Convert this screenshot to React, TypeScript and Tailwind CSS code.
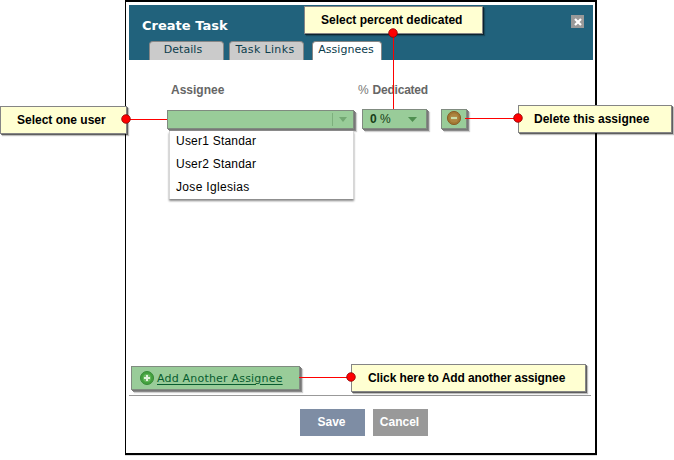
import React from "react";

const calloutBase =
  "absolute flex items-center border border-[#858585] bg-[#ffffd2] pb-px font-['Liberation_Sans',Arial,sans-serif] text-[12px] font-bold whitespace-nowrap text-black shadow-[1px_1px_0_rgba(0,0,0,0.5),2px_2px_1px_rgba(0,0,0,0.25)]";

const greenBox =
  "border border-[#808b80] bg-[#99cc99] shadow-[1px_1px_0_#777,2px_2px_0_#8a8a8a,3px_3px_1px_#d0d0d0]";

function Dot({ className }: { className: string }) {
  return (
    <svg className={`absolute size-[10px] ${className}`} viewBox="0 0 10 10">
      <circle cx="5" cy="5" r="4.3" fill="#ff0000" stroke="#8c0000" strokeWidth="0.8" />
    </svg>
  );
}

function Tab({ children, className }: { children: string; className: string }) {
  return (
    <div
      className={`flex h-[19px] justify-center rounded-t-[4px] border border-b-0 border-[#878787] font-['DejaVu_Sans',Verdana,sans-serif] text-[11px] leading-[15px] whitespace-nowrap text-[#0c3d4c] ${className}`}
    >
      {children}
    </div>
  );
}

function Header() {
  return (
    <header className="flex h-[55px] flex-col justify-between bg-[#21627c]">
      <div className="flex h-[36px] items-start justify-between pr-[9px] pl-[13px]">
        <h1 className="pt-[13px] font-['DejaVu_Sans',Verdana,sans-serif] text-[13px] leading-[16px] font-bold tracking-[0.02px] whitespace-nowrap text-white">
          Create Task
        </h1>
        <button className="mt-[10px] flex size-[13px] items-center justify-center bg-[#999]" aria-label="Close">
          <svg className="size-[8px]" viewBox="0 0 8 8">
            <path d="M1 1L7 7M7 1L1 7" stroke="#fff" strokeWidth="2.2" />
          </svg>
        </button>
      </div>
      <nav className="flex pl-5">
        <Tab className="mr-[5px] w-[75px] bg-[#cbcbcb] pr-[7px] tracking-[0.05px]">Details</Tab>
        <Tab className="mr-[8px] w-[75px] bg-[#cbcbcb] pr-[3px] tracking-[0.35px]">Task Links</Tab>
        <Tab className="w-[70px] bg-white pr-[2px] tracking-[0.03px]">Assignees</Tab>
      </nav>
    </header>
  );
}

function Body() {
  return (
    <main className="flex h-[335px] shrink-0 flex-col text-[12px]">
      <div className="flex h-[50px] shrink-0 items-start pt-[23px] pl-[42px] leading-[14px] font-bold whitespace-nowrap text-[#666]">
        <span className="w-[187px]">Assignee</span>
        <span className="tracking-[-0.22px]">
          <span className="mr-[1px] font-normal text-[#777]">%</span> Dedicated
        </span>
      </div>
      <div className="flex h-[256px] shrink-0 items-start pl-[38px]">
        <div className="flex w-[187px] flex-col">
          <div className={`flex h-[19px] items-center justify-end pr-[6px] ${greenBox}`}>
            <span className="mr-[6px] h-[13px] w-px bg-[#7db07d]" />
            <svg className="h-[5px] w-[8px]" viewBox="0 0 8 5">
              <path d="M0 0H8L4 5Z" fill="#73a873" />
            </svg>
          </div>
          <ul className="mt-[2px] ml-[2px] h-[68px] w-[185px] border-x border-[#d7d7d7] bg-white pl-[6px] leading-[23px] whitespace-nowrap text-black shadow-[0_2px_2px_#888]">
            <li className="-mt-px tracking-[0.22px]">User1 Standar</li>
            <li className="tracking-[0.22px]">User2 Standar</li>
            <li className="tracking-[0.32px]">Jose Iglesias</li>
          </ul>
        </div>
        <div className={`-mt-px ml-[8px] flex h-[20px] w-[65px] items-center justify-between pr-[9px] pl-[7px] ${greenBox}`}>
          <span className="text-[12px] whitespace-nowrap text-[#173e17]">
            <b>0</b> <span className="tracking-[-0.3px]">%</span>
          </span>
          <svg className="h-[5px] w-[9px]" viewBox="0 0 9 5">
            <path d="M0 0H9L4.5 5Z" fill="#4f8f50" />
          </svg>
        </div>
        <button className={`-mt-px ml-[14px] flex h-5 w-[26px] items-start justify-center ${greenBox}`} aria-label="Delete">
          <svg className="size-[16px]" viewBox="0 0 16 16">
            <circle cx="8" cy="8" r="6.6" fill="#a17632" stroke="#896029" />
            <circle cx="8" cy="8" r="4.6" fill="#ad8540" />
            <path d="M5 8H11" stroke="#c9dda8" strokeWidth="2.2" />
          </svg>
        </button>
      </div>
      <div className="flex flex-1 items-start pl-[2px]">
        <button className={`flex h-[24px] w-[169px] shrink-0 items-center pl-[8px] ${greenBox}`}>
          <svg className="size-[14px] shrink-0" viewBox="0 0 14 14">
            <circle cx="7" cy="7" r="6.5" fill="#44a13e" stroke="#358a35" />
            <circle cx="7" cy="7" r="4" fill="#68b861" />
            <path d="M7 4V10M4 7H10" stroke="#e2f2dc" strokeWidth="2" />
          </svg>
          <span className="ml-[3px] pt-[2px] font-['DejaVu_Sans',Verdana,sans-serif] text-[11px] tracking-[0.2px] whitespace-nowrap text-[#075c2f] underline underline-offset-2">
            Add Another Assignee
          </span>
        </button>
      </div>
    </main>
  );
}

export default function App() {
  return (
    <div className="relative h-[460px] w-[674px] overflow-hidden bg-white font-['Liberation_Sans',Arial,sans-serif]">
      <section className="ml-[125px] flex h-[455px] w-[472px] flex-col border-t-2 border-r-2 border-b-2 border-l border-black pt-[3px] pr-[2px] pl-[3px] shadow-[0_1px_0_#ddd]">
        <Header />
        <Body />
        <footer className="mr-[2px] flex h-[56px] items-start gap-2 border-t border-[#999] pt-[13px] pl-[171px]">
          <button className="h-[27px] w-[65px] bg-[#7e8da4] pr-[2px] pb-px text-[12px] font-bold text-white">Save</button>
          <button className="h-[27px] w-[55px] bg-[#999] pr-[2px] pb-px text-[12px] font-bold text-white">Cancel</button>
        </footer>
      </section>

      <div className="absolute top-[33px] left-[393px] h-[76px] w-px bg-[#ff0000]" />
      <div className="absolute top-[119px] left-[126px] h-px w-[41px] bg-[#ff0000]" />
      <div className="absolute top-[118px] left-[465px] h-px w-[53px] bg-[#ff0000]" />
      <div className="absolute top-[377px] left-[299px] h-px w-[52px] bg-[#ff0000]" />
      <div className={`${calloutBase} top-[6px] left-[304px] h-[28px] w-[179px] pl-[16px]`}>Select percent dedicated</div>
      <div className={`${calloutBase} top-[106px] left-0 h-[28px] w-[127px] pl-[16px]`}>Select one user</div>
      <div className={`${calloutBase} top-[105px] left-[518px] h-[28px] w-[154px] pl-[15px]`}>Delete this assignee</div>
      <div className={`${calloutBase} top-[364px] left-[351px] h-[28px] w-[235px] pl-[16px] tracking-[-0.09px]`}>Click here to Add another assignee</div>
      <Dot className="top-[28px] left-[388px]" />
      <Dot className="top-[114px] left-[121px]" />
      <Dot className="top-[113px] left-[513px]" />
      <Dot className="top-[372px] left-[346px]" />
    </div>
  );
}
